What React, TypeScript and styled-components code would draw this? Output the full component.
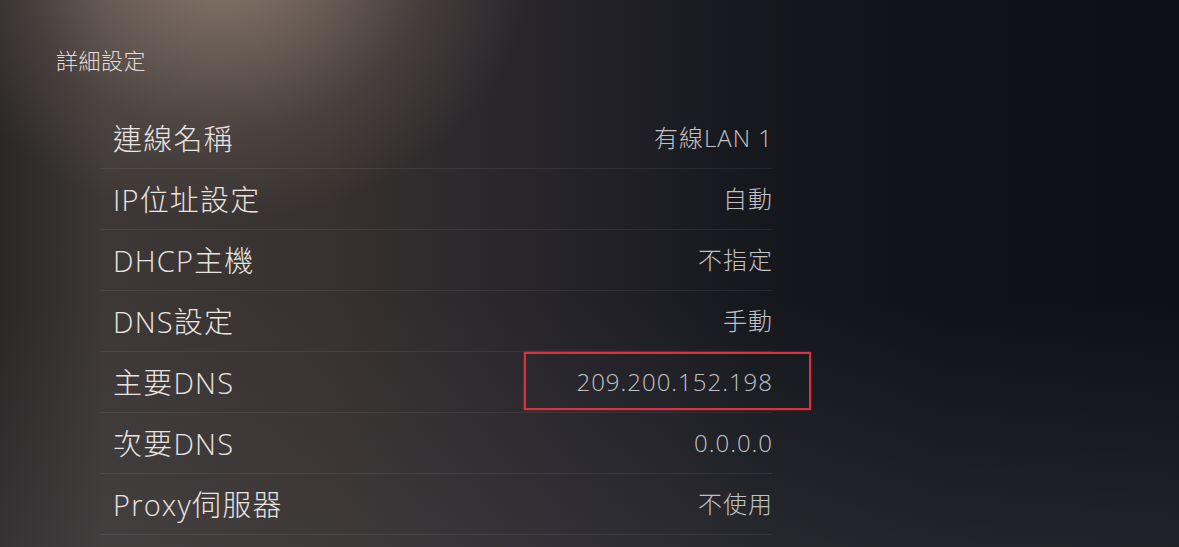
import React from 'react';
import styled, { createGlobalStyle } from 'styled-components';

const GlobalStyle = createGlobalStyle`
  html, body {
    margin: 0;
    padding: 0;
    background: #0e1117;
  }
  body {
    font-family: "Noto Sans CJK TC", "Noto Sans", sans-serif;
  }
`;

const Screen = styled.div`
  width: 1179px;
  height: 547px;
  overflow: hidden;
  position: relative;
  box-sizing: border-box;
  padding-top: 44px;
  background:
    radial-gradient(ellipse 380px 330px at 225px -50px, rgba(175, 152, 134, 0.72), rgba(120, 105, 98, 0.28) 55%, transparent 82%),
    linear-gradient(180deg, transparent 55%, rgba(80, 78, 82, 0.3) 100%),
    linear-gradient(90deg, #2a2727 0%, #3d3837 9%, #37312f 28%, #25232a 48%, #16181e 64%, #0f121a 80%, #0d1017 100%);
`;

const Header = styled.div`
  padding-left: 56px;
  font-size: 22px;
  font-weight: 300;
  color: #e2dcd8;
  line-height: 30px;
  letter-spacing: 0.5px;
`;

const List = styled.div`
  margin: 34px 0 0 100px;
  width: 672px;
  display: flex;
  flex-direction: column;
`;

const Row = styled.div`
  position: relative;
  height: 61px;
  box-sizing: border-box;
  border-bottom: 1px solid rgba(255, 255, 255, 0.07);
  display: flex;
  align-items: center;
  justify-content: space-between;
  padding-left: 13px;
`;

const Label = styled.span`
  font-family: "Open Sans", "Noto Sans CJK TC", sans-serif;
  font-size: 29px;
  font-weight: 300;
  color: #e8e4e1;
  line-height: 1;
  letter-spacing: 1.2px;
`;

const Value = styled.span`
  font-family: "Open Sans", "Noto Sans CJK TC", sans-serif;
  font-size: 24px;
  font-weight: 300;
  color: #c2c2c5;
  line-height: 1;
  letter-spacing: 1px;
  margin-right: -1px;
`;

const Highlight = styled.div`
  position: absolute;
  left: 424px;
  right: -39px;
  top: 0;
  height: 58px;
  box-sizing: border-box;
  border: 2px solid #d8333f;
  box-shadow: 0 0 2px rgba(230, 60, 70, 0.6);
  pointer-events: none;
`;

const rows = [
  { label: '連線名稱', value: '有線LAN 1' },
  { label: 'IP位址設定', value: '自動' },
  { label: 'DHCP主機', value: '不指定' },
  { label: 'DNS設定', value: '手動' },
  { label: '主要DNS', value: '209.200.152.198', marked: true },
  { label: '次要DNS', value: '0.0.0.0' },
  { label: 'Proxy伺服器', value: '不使用' },
];

export default function App() {
  return (
    <>
      <GlobalStyle />
      <Screen>
        <Header>詳細設定</Header>
        <List>
          {rows.map(row => (
            <Row key={row.label}>
              <Label>{row.label}</Label>
              <Value>{row.value}</Value>
              {row.marked && <Highlight />}
            </Row>
          ))}
        </List>
      </Screen>
    </>
  );
}
